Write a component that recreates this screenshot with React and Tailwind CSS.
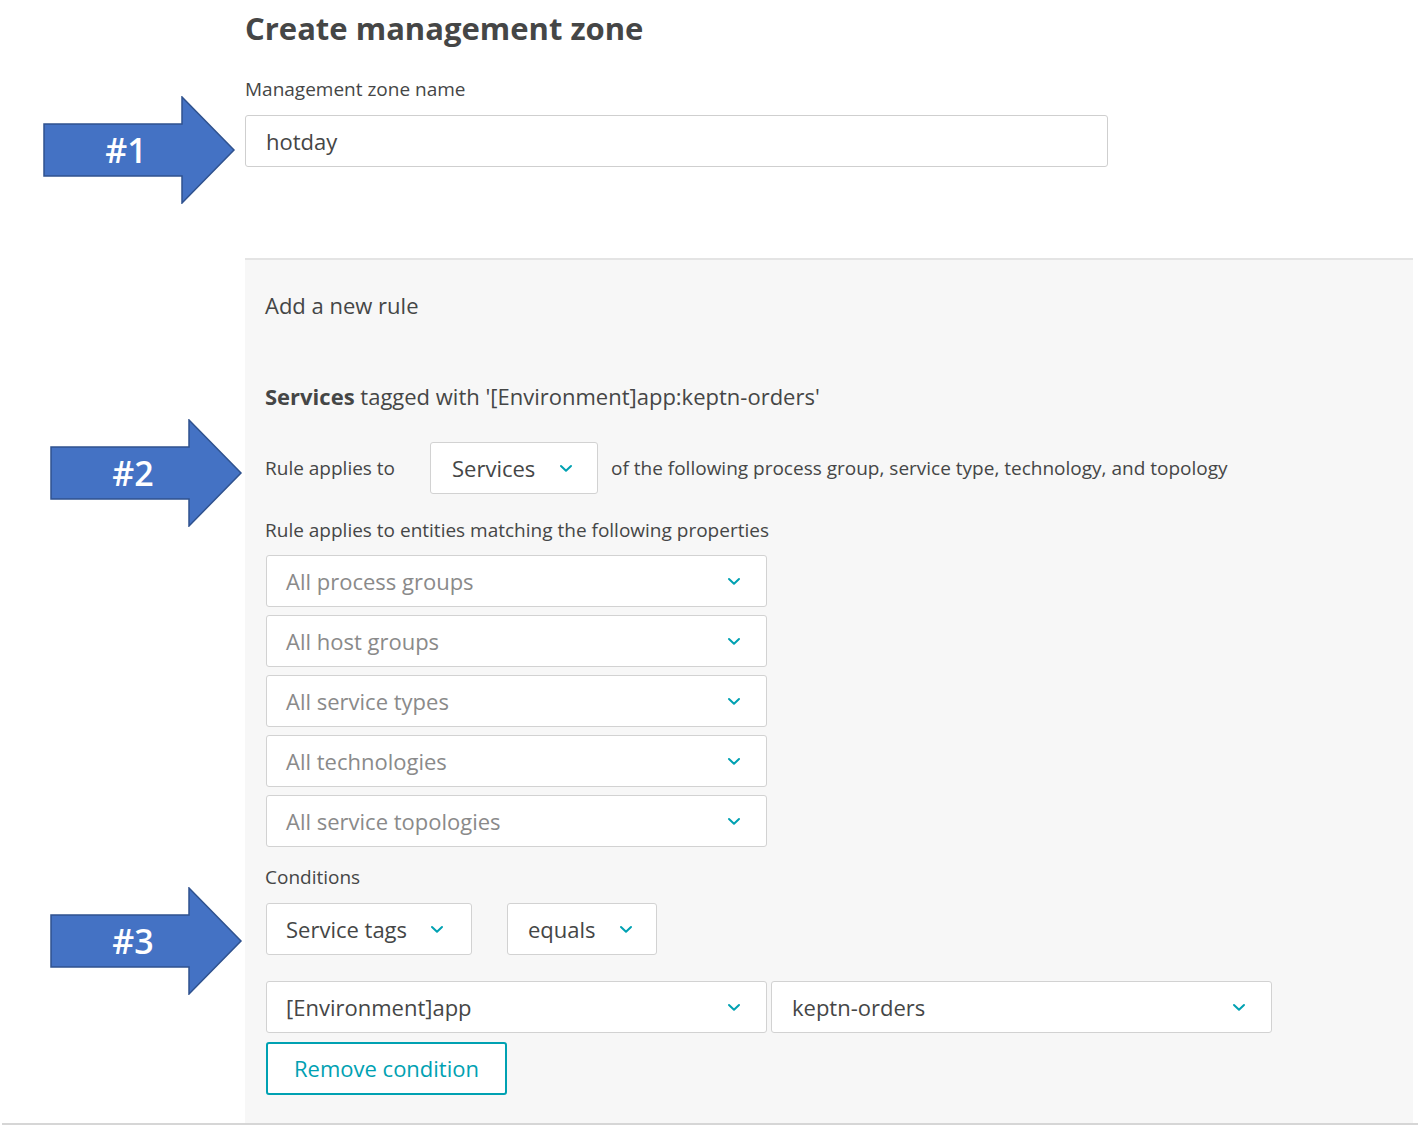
import React from "react";

const font = { fontFamily: "'Open Sans', 'Noto Sans', sans-serif" };

function Chevron({ className = "" }) {
  return (
    <svg width="14" height="9" viewBox="0 0 14 9" className={className}>
      <path d="M2 2 L7 6.8 L12 2" fill="none" stroke="#00a1b2" strokeWidth="2" strokeLinecap="round" strokeLinejoin="round" />
    </svg>
  );
}

function Arrow({ label, className }) {
  return (
    <div className={`absolute ${className}`}>
      <svg width="200" height="108" viewBox="0 0 200 108">
        <polygon
          points="1,28 139,28 139,1 191,54 139,107 139,80 1,80"
          fill="#4472c4"
          stroke="#2f528f"
          strokeWidth="1.5"
        />
      </svg>
      <div className="absolute left-0 top-0 w-[166px] h-[108px] flex items-center justify-center text-white text-[34px] font-semibold" style={{ fontFamily: "'Open Sans', sans-serif" }}>
        {label}
      </div>
    </div>
  );
}

function Select({ text, placeholder, className = "", chevClass = "" }) {
  return (
    <div className={`h-[52px] bg-white border border-[#d2d2d2] rounded-[3px] flex items-center ${className}`}>
      <span className={`text-[22px] ${placeholder ? "text-[#8a8a8a]" : "text-[#454646]"}`}>{text}</span>
      <Chevron className={chevClass} />
    </div>
  );
}

export default function App() {
  return (
    <div className="relative w-[1418px] h-[1125px] bg-white overflow-hidden text-[#454646]" style={font}>
      <div className="pl-[245px] pt-[8px]">
        <h1 className="text-[31px] font-bold leading-[40px] text-[#454646]">Create management zone</h1>
        <div className="mt-[29px] text-[19px] leading-[24px]">Management zone name</div>
        <div className="mt-[14px] w-[863px] h-[52px] border border-[#cfcfcf] rounded-[3px] flex items-center pl-[20px] text-[22px]">hotday</div>
      </div>

      <div className="ml-[245px] mt-[91px] w-[1168px] h-[865px] bg-[#f7f7f7] border-t-2 border-[#e4e4e4] pl-[20px]">
        <div className="pt-[31px] text-[22px] leading-[28px]">Add a new rule</div>
        <div className="mt-[63px] text-[22px] leading-[28px]">
          <span className="font-bold">Services</span> tagged with '[Environment]app:keptn-orders'
        </div>
        <div className="mt-[32px] flex items-center text-[19px]">
          <span className="w-[165px]">Rule applies to</span>
          <Select text="Services" className="w-[168px] pl-[21px] gap-[24px]" />
          <span className="ml-[13px]">of the following process group, service type, technology, and topology</span>
        </div>
        <div className="mt-[24px] text-[19px] leading-[24px]">Rule applies to entities matching the following properties</div>
        <div className="mt-[13px] flex flex-col gap-[8px] w-[501px] ml-[1px]">
          {["All process groups", "All host groups", "All service types", "All technologies", "All service topologies"].map((t) => (
            <Select key={t} text={t} placeholder className="w-full pl-[19px] pr-[25px] justify-between" />
          ))}
        </div>
        <div className="mt-[18px] text-[19px] leading-[24px]">Conditions</div>
        <div className="mt-[14px] flex gap-[35px] ml-[1px]">
          <Select text="Service tags" className="w-[206px] pl-[19px] gap-[23px]" />
          <Select text="equals" className="w-[150px] pl-[20px] gap-[23px]" />
        </div>
        <div className="mt-[26px] flex gap-[4px] ml-[1px]">
          <Select text="[Environment]app" className="w-[501px] pl-[19px] pr-[25px] justify-between" />
          <Select text="keptn-orders" className="w-[501px] pl-[20px] pr-[25px] justify-between" />
        </div>
        <button className="mt-[9px] ml-[1px] w-[241px] h-[53px] border-2 border-[#00a1b2] rounded-[3px] bg-white text-[#00a1b2] text-[22px]">Remove condition</button>
      </div>
      <div className="h-[3px] bg-[#d6d6d6] ml-[2px]"></div>

      <Arrow label="#1" className="left-[43px] top-[96px]" />
      <Arrow label="#2" className="left-[50px] top-[419px]" />
      <Arrow label="#3" className="left-[50px] top-[887px]" />
    </div>
  );
}
